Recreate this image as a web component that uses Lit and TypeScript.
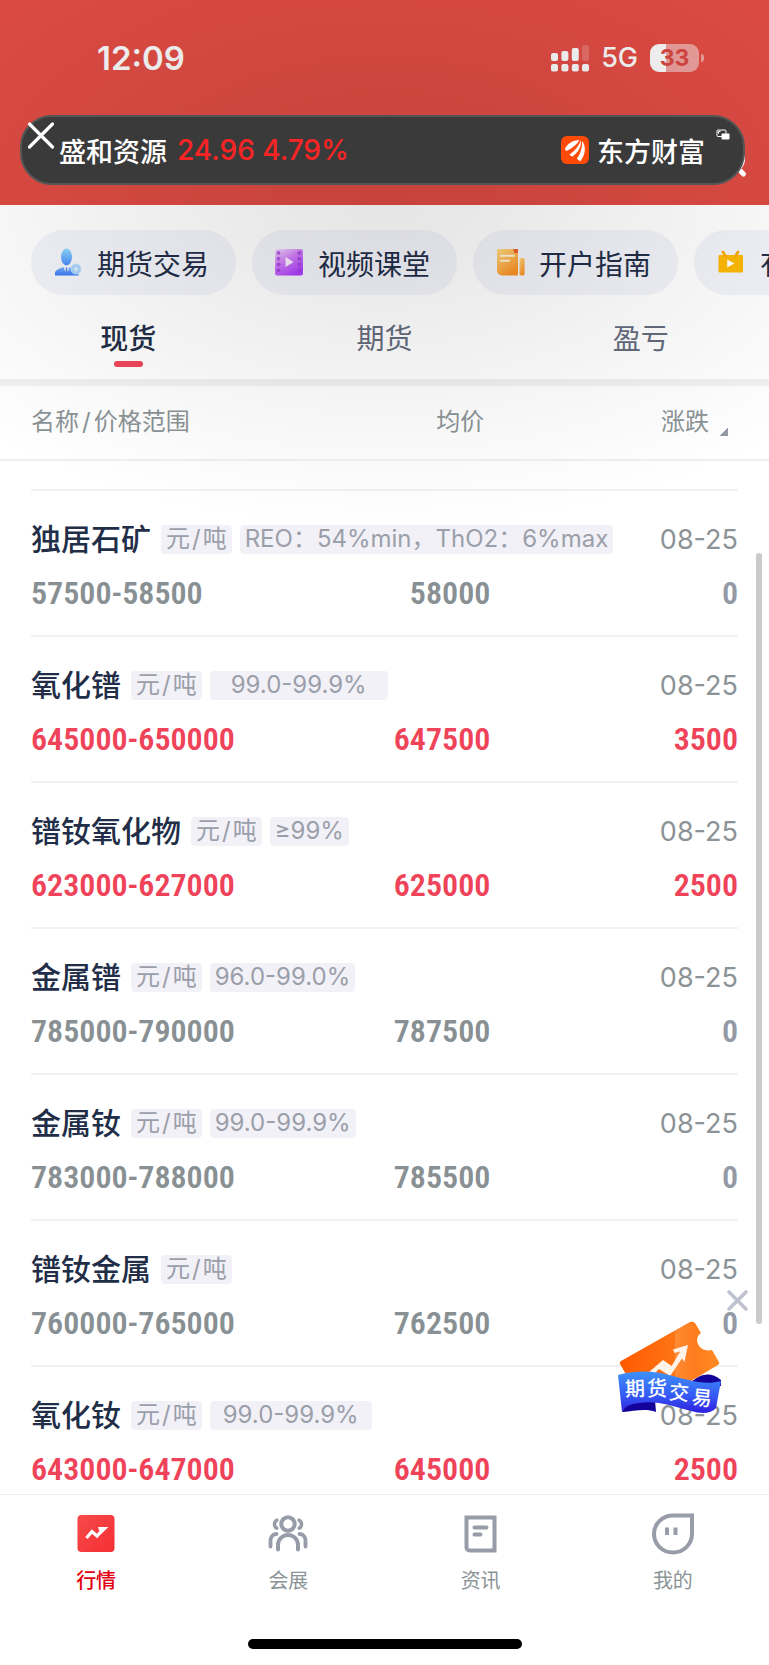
import { LitElement, html, css, svg } from "lit";
import { customElement } from "lit/decorators.js";
import { classMap } from "lit/directives/class-map.js";

interface Quote {
  name: string;
  spec: string;
  range: string;
  avg: string;
  change: string;
  up: boolean;
}

const QUOTES: Quote[] = [
  { name: "独居石矿", spec: "REO：54%min，ThO2：6%max", range: "57500-58500", avg: "58000", change: "0", up: false },
  { name: "氧化镨", spec: "\u2004\u200499.0-99.9%\u2004\u2004", range: "645000-650000", avg: "647500", change: "3500", up: true },
  { name: "镨钕氧化物", spec: "≥99%", range: "623000-627000", avg: "625000", change: "2500", up: true },
  { name: "金属镨", spec: "96.0-99.0%", range: "785000-790000", avg: "787500", change: "0", up: false },
  { name: "金属钕", spec: "99.0-99.9%", range: "783000-788000", avg: "785500", change: "0", up: false },
  { name: "镨钕金属", spec: "", range: "760000-765000", avg: "762500", change: "0", up: false },
  { name: "氧化钕", spec: "\u200499.0-99.9%\u2004", range: "643000-647000", avg: "645000", change: "2500", up: true },
];

const traderIcon = svg`
  <defs>
    <linearGradient id="tr" x1="0" y1="0" x2="0" y2="1"><stop offset="0" stop-color="#8fd8ff"/><stop offset="1" stop-color="#4a8af8"/></linearGradient>
    <linearGradient id="tb" x1="0" y1="0" x2="0" y2="1"><stop offset="0" stop-color="#78b4fb"/><stop offset="1" stop-color="#3b79f2"/></linearGradient>
  </defs>
  <ellipse cx="12.500" cy="9" rx="5.500" ry="8.500" fill="url(#tr)"/>
  <path d="M1 27.500v-3c1-3 5-4 8.500-5.500l3 8 3-8c3.500 1.500 8 2.500 9 5.500v3z" fill="url(#tb)"/>
  <path d="M11.400 19.500h2.200l-.5 1.800 1 4.200-1.600 2-1.600-2 1-4.200z" fill="#4a86f2"/>
  <circle cx="22" cy="21" r="5" fill="#a4d0f8" stroke="#c0e1fa"/>
  <path d="M22 18v6M19.500 21h5" stroke="#d8ecfb" stroke-width="1.400"/>`;

const filmIcon = svg`
  <defs><linearGradient id="fm" x1="0" y1="0" x2=".6" y2="1"><stop offset="0" stop-color="#f0dcfb"/><stop offset=".5" stop-color="#d07bf8"/><stop offset="1" stop-color="#ad40fb"/></linearGradient></defs>
  <rect x="0" y="1" width="28" height="26.500" rx="2" fill="url(#fm)"/>
  <g fill="#a13cd8" opacity=".75"><circle cx="3.500" cy="5" r="1.900"/><circle cx="3.500" cy="10.700" r="1.900"/><circle cx="3.500" cy="16.400" r="1.900"/><circle cx="3.500" cy="22.500" r="1.900"/>
  <circle cx="24.300" cy="5" r="1.900"/><circle cx="24.300" cy="10.700" r="1.900"/><circle cx="24.300" cy="16.400" r="1.900"/><circle cx="24.300" cy="22.500" r="1.900"/></g>
  <path d="M10.500 9v10l8-5z" fill="#fbeeff"/>`;

const guideIcon = svg`
  <defs><linearGradient id="gd" x1="0" y1="0" x2=".6" y2="1"><stop offset="0" stop-color="#ffda80"/><stop offset="1" stop-color="#fb9226"/></linearGradient></defs>
  <path d="M2 1h20v26.500H6a5 5 0 0 1-5-5V2.500z" fill="url(#gd)"/>
  <rect x="23.500" y="10" width="5" height="17.500" rx="1.500" fill="url(#gd)"/>
  <path d="M17 1h5v4h-3.500z" fill="#e8622c"/>
  <path d="M5 7.700h13M5 12.700h8" stroke="#fff4d8" stroke-width="2" stroke-linecap="round"/>`;

const tvIcon = svg`
  <path d="M2 7.500h23.500v16.500H2z" fill="#fdb902" stroke="#fdb902" stroke-linejoin="round"/>
  <path d="M6 4l2.500 4M21 4l-2.500 4" stroke="#fbab02" stroke-width="2.800" stroke-linecap="round"/>
  <path d="M10.200 11.500v8l7.300-4z" fill="#fff"/>`;

const CHIPS = [
  { label: "期货交易", icon: traderIcon },
  { label: "视频课堂", icon: filmIcon },
  { label: "开户指南", icon: guideIcon },
  { label: "有色直播", icon: tvIcon },
];

const marketIcon = svg`
  <defs><linearGradient id="mk" x1="0" y1="0" x2="1" y2="1"><stop offset="0" stop-color="#f64a48"/><stop offset="1" stop-color="#f52f35"/></linearGradient></defs>
  <rect x="1.500" y="3" width="37" height="37" rx="4" fill="url(#mk)"/>
  <path d="M10.500 26l5.500-6.500 5 4.500 5.500-6" fill="none" stroke="#fff" stroke-width="3.200"/>
  <path d="M22 15h10.500l-8 7.500z" fill="#fff"/>`;

const peopleIcon = svg`
  <g fill="none" stroke="#979ca8" stroke-width="4" stroke-linecap="round">
    <circle cx="20" cy="12" r="6.700"/>
    <path d="M10 37.500v-4.500a10 10 0 0 1 20 0v4.500"/>
    <path d="M8.800 8.200a4.600 4.600 0 0 0 0 8M31.200 8.200a4.600 4.600 0 0 1 0 8" stroke-width="3.500"/>
    <path d="M2.500 34.500v-5.500c0-3.500 2-7 6-7M37.500 34.500v-5.500c0-3.500-2-7-6-7" stroke-width="3.800"/>
  </g>`;

const newsIcon = svg`
  <path d="M5.500 5.500h28v33h-25a3 3 0 0 1-3-3z" fill="none" stroke="#979ca8" stroke-width="4"/>
  <path d="M13.500 15.500h12M13.500 22.500h6" stroke="#979ca8" stroke-width="4" stroke-linecap="round"/>`;

const mineIcon = svg`
  <path d="M20 3.500h19v18.500a19 18.500 0 1 1-19-18.500z" fill="none" stroke="#979ca8" stroke-width="4"/>
  <path d="M14 15.500v7.500M22.500 15.500v7.500" stroke="#979ca8" stroke-width="4"/>`;

const TABS = [
  { label: "行情", icon: marketIcon },
  { label: "会展", icon: peopleIcon },
  { label: "资讯", icon: newsIcon },
  { label: "我的", icon: mineIcon },
];

const slash = html`<span class="slash">/</span>`;

@customElement("app-root")
export class AppRoot extends LitElement {
  static styles = css`
    :host {
      display: flex;
      flex-direction: column;
      height: 100vh;
      position: relative;
      overflow: hidden;
      background: #fff;
      color: #222e48;
      font-family: Inter, "Noto Sans CJK SC", sans-serif;
      font-size: 24px;
    }
    * { box-sizing: border-box; }
    button, a { font: inherit; color: inherit; text-decoration: none; background: none; border: 0; padding: 0; }
    svg { display: block; flex: none; }

    .top { height: 205px; flex: none; background: #dd4b43; padding: 0 65px 0 97px; }
    .status { display: flex; align-items: center; height: 115px; color: #f6f6f6; }
    .clock { flex: 1; font-size: 33px; font-weight: 600; }
    .net { font-size: 27px; font-weight: 500; margin: 0 12px; }
    .battery { display: flex; align-items: center; gap: 2px; }
    .level {
      width: 49px; height: 28px; border-radius: 9px; text-align: center;
      font-size: 23px; line-height: 28px; font-weight: 700; color: #d24640;
      background: linear-gradient(90deg, #f6f6f6 33%, #e99d9a 33%);
    }
    .nub { width: 3px; height: 8px; border-radius: 0 3px 3px 0; background: #e99d9a; }

    .shade {
      position: absolute; inset: 0 0 auto; height: 700px; pointer-events: none;
      background: radial-gradient(ellipse 580px 330px at 50% 200px, rgba(0,0,0,.1), rgba(0,0,0,.088) 20%, rgba(0,0,0,.06) 45%, rgba(0,0,0,.03) 70%, transparent);
    }
    .search { position: absolute; top: 144px; right: 21px; }
    .ticker {
      position: absolute; top: 115px; left: 20px; right: 24px; height: 70px;
      display: flex; align-items: center; padding: 0 38px 0 37px;
      border: 2px solid #545656; border-radius: 32px; background: #3a3a3a;
      color: #fff; font-size: 27px; font-weight: 500;
    }
    .rate { flex: 1; margin-left: 10px; font-size: 28px; color: #fb2424; }
    .brand { display: flex; align-items: center; gap: 8px; }
    .dismiss { position: absolute; left: 5px; top: 4px; }
    .pip { position: absolute; right: 13px; top: 12px; }

    .chips { display: flex; flex: none; gap: 16px; padding: 25px 0 0 31px; overflow: hidden; }
    .chip {
      flex: none; display: flex; align-items: center; gap: 13px; width: 205px; height: 65px; padding-left: 23px;
      border-radius: 33px; background: #f3f4fa; font-size: 28px; white-space: nowrap;
    }
    .tabs { display: grid; grid-template-columns: repeat(3, 1fr); flex: none; height: 91px; padding-top: 23px; border-bottom: 7px solid #f1f1f1; }
    .tab { display: flex; flex-direction: column; align-items: center; justify-content: flex-start; font-size: 28px; line-height: 43px; color: #646b7c; }
    .tab.on { color: #222e48; font-weight: 500; }
    .tab.on::after { content: ""; width: 29px; height: 6px; border-radius: 3px; background: #f0455a; }

    .list { flex: 1; min-height: 0; overflow: hidden; }
    table, thead, tbody { display: block; }
    tr { display: grid; align-items: center; }
    th, td { padding: 0; text-align: left; font-weight: inherit; }
    .slash { margin: 0 3px; }
    .cols { border-bottom: 2px solid #f0f0f0; padding: 0 31px; font-weight: 400; color: #8b9396; }
    .cols tr { height: 73px; padding-bottom: 7px; }
    .cols tr, .nums { grid-template-columns: 1fr 1fr 1fr; }
    .cols th:nth-child(2) { text-align: right; padding-right: 18px; }
    .cols th:nth-child(3) { display: flex; justify-content: flex-end; align-items: flex-end; gap: 11px; padding-right: 10px; }
    .sort { width: 8px; height: 8px; margin-bottom: 1px; background: linear-gradient(135deg, transparent 50%, #9499a6 50%); }
    .gap { height: 30px; margin: 0 31px; border-bottom: 2px solid #f1f2f3; }
    .row { height: 146px; margin: 0 31px; padding-top: 25px; border-bottom: 2px solid #f1f2f3; }
    .head { grid-template-columns: 1fr auto; height: 46px; }
    .title { display: flex; align-items: center; gap: 8px; white-space: nowrap; }
    .name { font-size: 30px; font-weight: 500; line-height: 46px; margin-right: 2px; }
    .tag { height: 29px; padding: 0 5px; border-radius: 4px; background: #f2f1f8; color: #9b9fa9; line-height: 28px; white-space: pre; }
    .tag .slash { margin: 0 2px; }
    .date { font-size: 27px; color: #8b9396; }
    .nums { height: 62px; white-space: nowrap; font: 600 32px "Roboto Condensed", Roboto, sans-serif; color: #889093; }
    .nums td:nth-child(2) { text-align: right; padding-right: 12px; }
    .nums td:nth-child(3) { text-align: right; color: #9499a6; }
    .nums.up, .nums.up td:nth-child(3) { color: #ee4358; }

    .scroll { position: absolute; top: 553px; right: 7px; width: 6px; height: 771px; border-radius: 3px; background: #cacaca; }
    .promo { position: absolute; right: 17px; bottom: 240px; width: 140px; height: 140px; }

    .bar { flex: none; border-top: 1px solid #f0f0f1; background: #fff; padding-bottom: 16px; }
    .nav { display: grid; grid-template-columns: repeat(4, 1fr); height: 144px; padding-top: 17px; }
    .item { display: flex; flex-direction: column; align-items: center; gap: 11px; font-size: 20px; line-height: 30px; color: #8b9396; }
    .item.on { color: #e1000f; font-weight: 500; }
    .home { width: 274px; height: 10px; margin: 0 auto; border-radius: 5px; background: #000; }
  `;

  render() {
    return html`
      <header class="top">
        <div class="status">
          <span class="clock">12:09</span>
          <svg width="38" height="28" viewBox="0 0 38 28" fill="#f6f6f6">
            <rect x="0" y="9" width="7" height="8" rx="2"/><rect x="10.400" y="7" width="7" height="10" rx="2"/><rect x="20.800" y="4" width="7" height="13" rx="2"/>
            <rect x="31" y="1" width="7" height="16" rx="2" opacity=".2"/>
            <rect x="0" y="20" width="7" height="7.500" rx="2"/><rect x="10.400" y="20" width="7" height="7.500" rx="2"/><rect x="20.800" y="20" width="7" height="7.500" rx="2"/><rect x="31" y="20" width="7" height="7.500" rx="2"/>
          </svg>
          <span class="net">5G</span>
          <span class="battery"><span class="level">33</span><span class="nub"></span></span>
        </div>
      </header>

      <nav class="chips">
        ${CHIPS.map((c) => html`
          <button class="chip"><svg width="30" height="30" viewBox="0 0 30 30">${c.icon}</svg>${c.label}</button>`)}
      </nav>
      <nav class="tabs">
        ${["现货", "期货", "盈亏"].map((t, i) => html`<button class=${classMap({ tab: true, on: i === 0 })}>${t}</button>`)}
      </nav>

      <main class="list">
        <table>
          <thead class="cols">
            <tr><th>名称${slash}价格范围</th><th>均价</th><th>涨跌<span class="sort"></span></th></tr>
          </thead>
          <tbody class="gap"></tbody>
          ${QUOTES.map((q) => html`
            <tbody class="row">
              <tr class="head">
                <td class="title">
                  <span class="name">${q.name}</span><span class="tag">元${slash}吨</span>${q.spec ? html`<span class="tag">${q.spec}</span>` : ""}
                </td>
                <td class="date">08-25</td>
              </tr>
              <tr class=${classMap({ nums: true, up: q.up })}><td>${q.range}</td><td>${q.avg}</td><td>${q.change}</td></tr>
            </tbody>`)}
        </table>
      </main>

      <footer class="bar">
        <nav class="nav">
          ${TABS.map((t, i) => html`
            <a href="#" class=${classMap({ item: true, on: i === 0 })}><svg width="42" height="43" viewBox="-1 0 42 43">${t.icon}</svg>${t.label}</a>`)}
        </nav>
        <div class="home"></div>
      </footer>

      <div class="shade"></div>
      <svg class="search" width="32" height="34" viewBox="0 0 32 34" fill="none" stroke="#fff" stroke-width="4" stroke-linecap="round">
        <circle cx="15" cy="15" r="12"/><path d="M25 27.500l2.500 2.500" stroke-width="5"/>
      </svg>
      <section class="ticker">
        <span>盛和资源</span><span class="rate">24.96 4.79%</span>
        <span class="brand">
          <svg width="28" height="28" viewBox="0 0 28 28">
            <rect width="28" height="28" rx="6" fill="#ff4a08"/>
            <path d="M4 12.500c3-5 8-8.500 14.500-8.500-2.500 4.500-7 8-13 11-1-.5-1.500-1.500-1.500-2.500zM8.500 18.500c5-3.500 9-8 11.300-14 1 6-3 12.500-8.300 16-1.300-.3-2.400-1-3-2zM16 22.500c3.200-4.500 5.300-10 5-17.500 4.500 5 3.500 14-1.500 20-1.800-.3-3-1.300-3.500-2.500z" fill="#fff"/>
          </svg>
          东方财富
        </span>
        <button class="dismiss" aria-label="关闭"><svg width="30" height="30" viewBox="0 0 30 30" stroke="#fff" stroke-width="3.200" stroke-linecap="round"><path d="M2.500 3l23 23M25.500 3l-23 23"/></svg></button>
        <svg class="pip" width="14" height="11" viewBox="0 0 14 11"><rect x="1" y="1" width="9" height="6.500" rx="1" fill="none" stroke="#fff"/><rect x="5.500" y="4.500" width="8" height="6" rx="1" fill="#fff"/><path d="M2.500 4.500v-2h2" stroke="#fff" fill="none"/></svg>
      </section>

      <div class="scroll"></div>
      <a href="#" class="promo" aria-label="期货交易">
        <svg width="140" height="140" viewBox="612 1285 140 140">
          <defs>
            <linearGradient id="tk" x1="0" y1="0" x2="1" y2="0"><stop offset="0" stop-color="#ff5a00"/><stop offset=".55" stop-color="#ff7414"/><stop offset=".56" stop-color="#ff8a34"/><stop offset=".76" stop-color="#ff7c1c"/><stop offset="1" stop-color="#ff8c24"/></linearGradient>
            <linearGradient id="rb" x1="0" y1="0" x2="0" y2="1"><stop offset="0" stop-color="#3d92fb"/><stop offset=".6" stop-color="#3557f3"/><stop offset="1" stop-color="#2f1fe0"/></linearGradient>
          </defs>
          <path d="M729 1292l17 17M746 1292l-17 17" stroke="#bfc3cf" stroke-width="3.600" stroke-linecap="round"/>
          <path d="M627 1376l-7-12q-1-2 1-3l69-39q3-1 5 1l6 10c-8 5-3 20 11 17l7 12q1 2-1 3l-27 16h-50z" fill="url(#tk)"/>
          <path d="M649 1373l14-12 9 6 10-17-7 2-1-2 13-4-3 14-2-3-12 18-11-7-6 6z" fill="#fff3ea" stroke="#fff3ea" stroke-width="1.500"/>
          <path d="M690 1383c10-9 20-12 31-3v6l-14 2z" fill="#14029a"/>
          <path d="M622 1412c3-9 14-10 33-12l1 12c-10-4-22-1-33 0z" fill="#14029a"/>
          <path d="M618 1375c35-9 53 2 71 5 11 3 22 4 32 1l-5 27c-5 6-15 6-25 3-18-5-35-11-52-8-10 1-15 4-17 9z" fill="url(#rb)"/>
          <g fill="#fff" font-family="Noto Sans CJK SC, sans-serif" font-size="20" font-weight="500">
            <text x="625" y="1396" transform="rotate(-2 635 1389)">期</text><text x="647" y="1396">货</text>
            <text x="669" y="1400" transform="rotate(5 679 1393)">交</text><text x="692" y="1405" transform="rotate(6 702 1398)">易</text>
          </g>
        </svg>
      </a>
    `;
  }
}
